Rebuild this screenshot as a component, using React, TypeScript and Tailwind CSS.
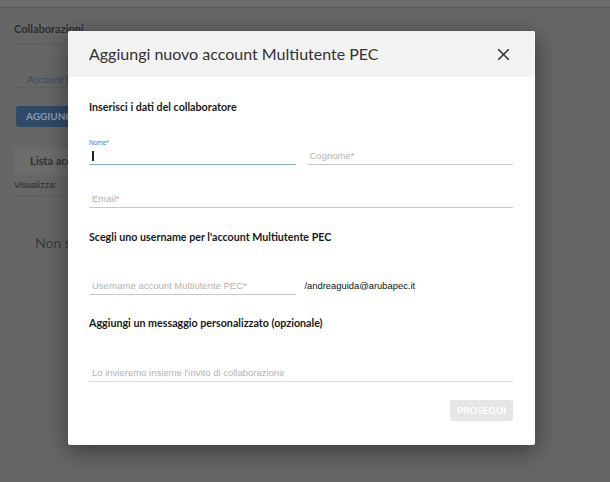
import { X } from "lucide-react";

const lato = { fontFamily: "Lato, 'Open Sans', sans-serif" };
const arial = { fontFamily: "'Liberation Sans', Arial, sans-serif" };

const Field = ({ placeholder, line = "border-[#c9c9c9]" }: { placeholder: string; line?: string }) => (
  <div className={`h-[17px] border-b ${line} flex items-center pl-[3px]`}>
    <span className="text-[9.5px] text-[#b3b3b3]" style={arial}>
      {placeholder}
    </span>
  </div>
);

const App = () => {
  return (
    <div className="relative w-[610px] h-[482px] overflow-hidden bg-[#666666]" style={lato}>
      {/* page behind the overlay, already dimmed */}
      <div className="h-[8px] bg-[#6b6b6b] border-b border-[#5a5a5a]" />
      <div className="w-[520px] px-[14px]">
        <div className="h-[37px] flex items-end pb-[7px] border-b border-[#5e5e5e]">
          <span className="text-[11px] font-bold text-[#2e2e2e]">Collaborazioni</span>
        </div>
        <div className="mt-[20px] h-[23px] border-b border-[#5e5e5e] pl-[13px]">
          <span className="text-[10px] text-[#3c4a5c]">Account Multiutente</span>
        </div>
        <div className="mt-[18px] ml-[2px] w-[80px] h-[21px] rounded-[3px] bg-[#2f4a67] flex items-center pl-[10px]">
          <span className="text-[10px] font-bold text-[#8d9cae]">AGGIUNGI</span>
        </div>
        <div className="mt-[21px] h-[27px] bg-[#6c6c6c] flex items-center pl-[16px]">
          <span className="text-[11px] font-bold text-[#333333]">Lista account</span>
        </div>
        <div className="h-[22px] border-b border-[#5e5e5e] flex items-center">
          <span className="text-[9px] text-[#2a2a2a]" style={arial}>
            Visualizza:
          </span>
        </div>
        <div className="mt-[33px] pl-[21px]">
          <span className="text-[14px] text-[#3a3a3a]">Non sono presenti account</span>
        </div>
      </div>

      {/* modal */}
      <div className="absolute inset-0 pl-[68px] pt-[31px]">
        <div className="w-[467px] h-[414px] bg-white rounded-[2px] shadow-[0_6px_24px_rgba(0,0,0,0.45)] overflow-hidden">
          <div className="h-[46px] bg-[#f2f2f2] flex items-center justify-between pl-[21px] pr-[22px]">
            <span className="text-[16px] text-[#333333]">Aggiungi nuovo account Multiutente PEC</span>
            <X size={19} strokeWidth={2.1} className="text-[#333333]" />
          </div>

          <div className="pl-[21px] pr-[22px]">
            <div className="mt-[23px] h-[14px] flex items-center">
              <span className="text-[10.7px] font-bold text-[#1a1a1a]">Inserisci i dati del collaboratore</span>
            </div>

            <div className="mt-[24px] grid grid-cols-2 gap-[11px] items-end">
              <div>
                <div className="h-[10px] flex items-center">
                  <span className="text-[6.5px] text-[#3d7bd2]" style={arial}>
                    Nome*
                  </span>
                </div>
                <div className="h-[17px] border-b border-[#86a9dc] flex items-center pl-[3px]">
                  <span className="w-[1.5px] h-[10px] bg-[#222222]" />
                </div>
              </div>
              <Field placeholder="Cognome*" />
            </div>

            <div className="mt-[26px]">
              <Field placeholder="Email*" />
            </div>

            <div className="mt-[22px] h-[14px] flex items-center">
              <span className="text-[10.7px] font-bold text-[#1a1a1a]">
                Scegli uno username per l'account Multiutente PEC
              </span>
            </div>

            <div className="mt-[34px] grid grid-cols-2 gap-[11px] items-end">
              <Field placeholder="Username account Multiutente PEC*" />
              <div className="h-[17px] flex items-center -ml-[2px]">
                <span className="text-[9.4px] text-[#111111]" style={arial}>
                  /andreaguida@arubapec.it
                </span>
              </div>
            </div>

            <div className="mt-[21px] h-[14px] flex items-center">
              <span className="text-[10.7px] font-bold text-[#1a1a1a]">
                Aggiungi un messaggio personalizzato (opzionale)
              </span>
            </div>

            <div className="mt-[35px]">
              <Field placeholder="Lo invieremo insieme l'invito di collaborazione" line="border-[#dcdcdc]" />
            </div>

            <div className="mt-[18px] flex justify-end">
              <div className="w-[63px] h-[21px] rounded-[3px] bg-[#e6e6e6] flex items-center justify-center">
                <span className="text-[10px] font-bold text-white">PROSEGUI</span>
              </div>
            </div>
          </div>
        </div>
      </div>
    </div>
  );
};

export default App;
